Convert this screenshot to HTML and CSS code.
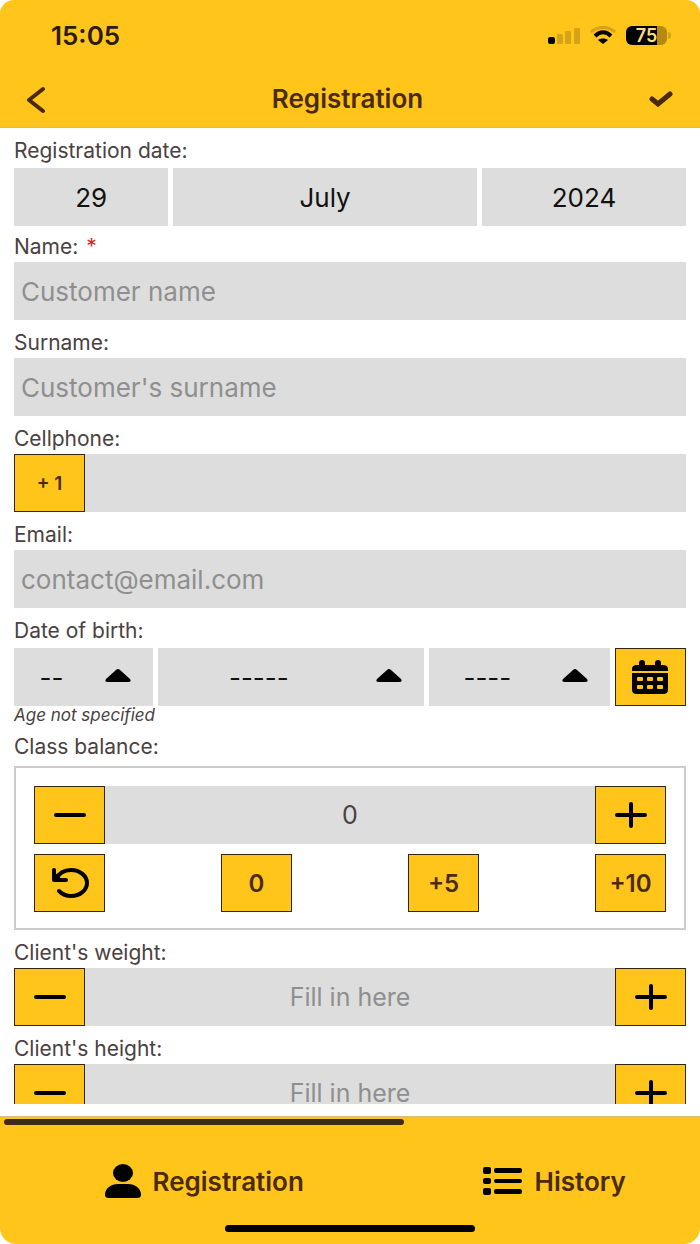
FILE: index.html
```html
<!DOCTYPE html>
<html lang="en">
<head>
  <meta charset="UTF-8">
  <meta name="viewport" content="width=device-width, initial-scale=1.0">
  <title>Registration</title>
  <link rel="stylesheet" href="styles.css">
</head>
<body>
  <header class="header">
    <div class="status-bar">
      <span class="clock">15:05</span>
      <div class="status-icons">
        <svg width="32" height="17" viewBox="0 0 32 17">
          <rect x="0" y="10" width="7" height="7" rx="2"/>
          <g fill="#d6a316">
            <rect x="9" y="7" width="6" height="10" rx="1"/>
            <rect x="17" y="4" width="6" height="13" rx="1"/>
            <rect x="26" y="1" width="6" height="16" rx="1"/>
          </g>
        </svg>
        <svg width="28" height="18" viewBox="0 0 28 18" fill="none">
          <path d="M2 6C9 0 19 0 26 6" stroke="#d6a316" stroke-width="3"/>
          <path d="M6 10C11 5 17 5 22 10" stroke="#000" stroke-width="4"/>
          <path d="M9 14C12 12 16 12 19 14L14 18Z" fill="#000"/>
        </svg>
        <div class="battery">75</div>
      </div>
    </div>
    <div class="nav-bar">
      <button class="nav-btn" type="button" aria-label="Back">
        <svg width="20" height="28" viewBox="0 0 20 28" fill="none" stroke="#4a2a0c" stroke-width="4" stroke-linecap="round" stroke-linejoin="round">
          <path d="M17 4L3 15L17 26"/>
        </svg>
      </button>
      <h1 class="title">Registration</h1>
      <button class="nav-btn" type="submit" form="registrationForm" aria-label="Save">
        <svg width="24" height="16" viewBox="0 0 24 16" fill="none" stroke="#4a2a0c" stroke-width="5" stroke-linecap="round">
          <path d="M3 8L9 13L21 3"/>
        </svg>
      </button>
    </div>
  </header>

  <main class="content">
    <form id="registrationForm">
      <!-- Registration date -->
      <div class="group date-group reg-date">
        <label for="regDay">Registration date:</label>
        <div class="reg-row">
          <select class="field select" id="regDay"><option>29</option></select>
          <select class="field select" aria-label="Month"><option>July</option></select>
          <select class="field select" aria-label="Year"><option>2024</option></select>
        </div>
      </div>

      <div class="group">
        <label for="name">Name: <span class="required">*</span></label>
        <input class="field" type="text" id="name" placeholder="Customer name" required>
      </div>
      <div class="group">
        <label for="surname">Surname:</label>
        <input class="field" type="text" id="surname" placeholder="Customer's surname">
      </div>
      <div class="group">
        <label for="phone">Cellphone:</label>
        <div class="row">
          <button class="btn btn-code" type="button">+ 1</button>
          <input class="field" type="tel" id="phone">
        </div>
      </div>
      <div class="group">
        <label for="email">Email:</label>
        <input class="field" type="email" id="email" placeholder="contact@email.com">
      </div>

      <!-- Date of birth -->
      <div class="group date-group">
        <label for="birthDay">Date of birth:</label>
        <div class="birth-row">
          <div class="select-wrap">
            <select class="field select" id="birthDay"><option>--</option></select>
            <svg class="arrow" width="26" height="14" viewBox="0 0 26 14"><path d="M11 1Q13 -1 15 1L25 10Q27 13 23 13H3Q-1 13 1 10Z"/></svg>
          </div>
          <div class="select-wrap">
            <select class="field select" aria-label="Birth month"><option>-----</option></select>
            <svg class="arrow" width="26" height="14" viewBox="0 0 26 14"><path d="M11 1Q13 -1 15 1L25 10Q27 13 23 13H3Q-1 13 1 10Z"/></svg>
          </div>
          <div class="select-wrap">
            <select class="field select" aria-label="Birth year"><option>----</option></select>
            <svg class="arrow" width="26" height="14" viewBox="0 0 26 14"><path d="M11 1Q13 -1 15 1L25 10Q27 13 23 13H3Q-1 13 1 10Z"/></svg>
          </div>
          <button class="btn" type="button" aria-label="Open calendar">
            <svg width="36" height="34" viewBox="0 0 36 34">
              <path d="M7 5V3Q7 0 10 0T13 3V5H23V3Q23 0 26 0T29 3V5H31Q36 5 36 9V11H0V9Q0 5 5 5Z"/>
              <path fill-rule="evenodd" d="M0 13H36V30Q36 34 31 34H5Q0 34 0 30ZM6 17Q5 17 5 18V20Q5 21 6 21H10Q11 21 11 20V18Q11 17 10 17ZM16 17Q15 17 15 18V20Q15 21 16 21H20Q21 21 21 20V18Q21 17 20 17ZM26 17Q25 17 25 18V20Q25 21 26 21H30Q31 21 31 20V18Q31 17 30 17ZM6 25Q5 25 5 26V28Q5 29 6 29H10Q11 29 11 28V26Q11 25 10 25ZM16 25Q15 25 15 26V28Q15 29 16 29H20Q21 29 21 28V26Q21 25 20 25ZM26 25Q25 25 25 26V28Q25 29 26 29H30Q31 29 31 28V26Q31 25 30 25Z"/>
            </svg>
          </button>
        </div>
        <p class="hint">Age not specified</p>
      </div>

      <!-- Class balance -->
      <div class="group balance-group">
        <label for="balance">Class balance:</label>
        <div class="balance-box">
          <div class="row">
            <button class="btn" type="button" aria-label="Decrease balance">
              <svg class="sign" width="34" height="28" viewBox="0 0 34 28"><path d="M3 14H31"/></svg>
            </button>
            <input class="field centered" type="text" id="balance" value="0">
            <button class="btn" type="button" aria-label="Increase balance">
              <svg class="sign" width="34" height="28" viewBox="0 0 34 28"><path d="M3 14H31M17 3V25"/></svg>
            </button>
          </div>
          <div class="row presets">
            <button class="btn" type="button" aria-label="Undo">
              <svg width="38" height="30" viewBox="0 0 38 30" fill="none" stroke="#000" stroke-width="4" stroke-linecap="round" stroke-linejoin="round">
                <path d="M5 11C8 5 14 2 20 2C29 2 36 8 36 15C36 22 29 28 20 28C15 28 11 26 8 23"/>
                <path d="M3 2V12H15"/>
                <path d="M4 6L9 11H4Z" fill="#000" stroke-width="2"/>
              </svg>
            </button>
            <button class="btn" type="button">0</button>
            <button class="btn" type="button">+5</button>
            <button class="btn" type="button">+10</button>
          </div>
        </div>
      </div>

      <div class="group">
        <label for="weight">Client's weight:</label>
        <div class="row">
          <button class="btn" type="button" aria-label="Decrease weight">
            <svg class="sign" width="34" height="28" viewBox="0 0 34 28"><path d="M3 14H31"/></svg>
          </button>
          <input class="field centered" type="text" id="weight" placeholder="Fill in here">
          <button class="btn" type="button" aria-label="Increase weight">
            <svg class="sign" width="34" height="28" viewBox="0 0 34 28"><path d="M3 14H31M17 3V25"/></svg>
          </button>
        </div>
      </div>
      <div class="group">
        <label for="height">Client's height:</label>
        <div class="row">
          <button class="btn" type="button" aria-label="Decrease height">
            <svg class="sign" width="34" height="28" viewBox="0 0 34 28"><path d="M3 14H31"/></svg>
          </button>
          <input class="field centered" type="text" id="height" placeholder="Fill in here">
          <button class="btn" type="button" aria-label="Increase height">
            <svg class="sign" width="34" height="28" viewBox="0 0 34 28"><path d="M3 14H31M17 3V25"/></svg>
          </button>
        </div>
      </div>
    </form>
  </main>

  <footer class="footer">
    <nav class="tabs">
      <a class="tab active" href="#registration">
        <svg width="36" height="34" viewBox="0 0 36 34">
          <ellipse cx="18" cy="9" rx="10" ry="9"/>
          <path d="M0 31C0 24 6 20 13 20H23C30 20 36 24 36 31Q36 34 32 34H4Q0 34 0 31Z"/>
        </svg>
        Registration
      </a>
      <a class="tab" href="#history">
        <svg width="40" height="28" viewBox="0 0 40 28">
          <rect x="0" y="0" width="8" height="7" rx="2"/>
          <rect x="0" y="11" width="8" height="6" rx="2"/>
          <rect x="0" y="21" width="8" height="7" rx="2"/>
          <rect x="11" y="1" width="28" height="5" rx="2"/>
          <rect x="11" y="12" width="28" height="4" rx="2"/>
          <rect x="11" y="22" width="28" height="5" rx="2"/>
        </svg>
        History
      </a>
    </nav>
    <div class="home-bar"></div>
  </footer>
</body>
</html>
```
FILE: styles.css
```css
* {
  box-sizing: border-box;
}
body {
  margin: 0;
  height: 100vh;
  display: flex;
  flex-direction: column;
  background-color: #fff;
  font-family: Inter, "Liberation Sans", sans-serif;
  color: #4a4140;
}
svg {
  display: block;
  flex: none;
}

/* Header */
.header {
  flex: none;
  background-color: #ffc51a;
  border-bottom: 1px solid #d9bd73;
  border-radius: 14px 14px 0 0;
}
.status-bar {
  display: flex;
  justify-content: space-between;
  align-items: center;
  height: 70px;
  padding: 0 33px 0 51px;
}
.clock {
  font-size: 26px;
  font-weight: 600;
  color: #2b1a05;
}
.status-icons {
  display: flex;
  align-items: center;
  gap: 9px;
}
.battery {
  position: relative;
  width: 41px;
  height: 19px;
  border-radius: 6px;
  background: linear-gradient(to right, #000 75%, #b58a12 75%);
  color: #ffe07a;
  font-size: 18px;
  font-weight: 600;
  line-height: 19px;
  text-align: center;
}
.battery::after {
  content: "";
  position: absolute;
  left: 42px;
  top: 6px;
  width: 3px;
  height: 7px;
  border-radius: 0 3px 3px 0;
  background-color: #d6a316;
}
.nav-bar {
  display: flex;
  justify-content: space-between;
  align-items: center;
  height: 57px;
  padding: 0 27px 0 26px;
}
.nav-btn {
  display: flex;
  padding: 0;
  border: none;
  background: none;
  cursor: pointer;
}
.title {
  margin: 0;
  font-size: 26px;
  font-weight: 600;
  color: #4a2a0c;
}

/* Form */
.content {
  flex: 1;
  min-height: 0;
  margin-bottom: 12px;
  padding: 12px 14px 0;
  overflow-y: auto;
  scrollbar-width: none;
}
.group {
  margin-bottom: 12px;
}
label {
  display: block;
  margin-bottom: 4px;
  font-size: 21px;
  line-height: 22px;
}
.date-group label {
  margin-bottom: 6px;
}
.reg-date {
  margin-bottom: 10px;
}
.balance-group label {
  margin-bottom: 8px;
}
.required {
  margin-left: 2px;
  color: #e02020;
}
.field {
  display: block;
  width: 100%;
  min-width: 0;
  height: 58px;
  margin: 0;
  padding: 0 7px;
  border: none;
  border-radius: 0;
  background-color: #ddd;
  color: #4a4140;
  font-family: inherit;
  font-size: 26px;
}
.field::placeholder {
  color: #8f8f8f;
  opacity: 1;
}
.centered {
  font-size: 25px;
  text-align: center;
}
.select {
  appearance: none;
  color: #111;
  font-size: 26px;
  text-align: center;
  text-align-last: center;
}
.row {
  display: flex;
}
.row .field {
  flex: 1;
}
.reg-row {
  display: grid;
  grid-template-columns: 31fr 61fr 41fr;
  gap: 5px;
}
.birth-row {
  display: grid;
  grid-template-columns: 23fr 44fr 30fr 71px;
  gap: 5px;
}
.select-wrap {
  position: relative;
}
.select-wrap .select {
  padding-right: 71px;
}
.arrow {
  position: absolute;
  right: 22px;
  top: 21px;
  pointer-events: none;
}
.btn {
  flex: none;
  display: flex;
  justify-content: center;
  align-items: center;
  width: 71px;
  height: 58px;
  padding: 0;
  border: 1px solid #33260f;
  background-color: #ffc51a;
  color: #4a2a0c;
  font-family: inherit;
  font-size: 24px;
  font-weight: 600;
  cursor: pointer;
}
.btn-code {
  font-size: 19px;
}
.sign {
  fill: none;
  stroke: #000;
  stroke-width: 4;
  stroke-linecap: round;
}
.hint {
  margin: 0;
  font-size: 17px;
  font-style: italic;
  line-height: 18px;
}
.balance-box {
  padding: 18px 18px 16px;
  border: 2px solid #ccc;
}
.presets {
  justify-content: space-between;
  margin-top: 10px;
}

/* Bottom tabs */
.footer {
  flex: none;
  background-color: #ffc51a;
  border-top: 1px solid #d9bd73;
  border-radius: 0 0 16px 16px;
  padding-bottom: 12px;
}
.tabs {
  display: grid;
  grid-template-columns: 7fr 5fr;
}
.tab {
  position: relative;
  display: flex;
  justify-content: center;
  align-items: center;
  gap: 12px;
  height: 108px;
  padding-top: 20px;
  color: #4a2a0c;
  font-size: 26px;
  font-weight: 600;
  text-decoration: none;
}
.tab svg {
  fill: #000;
}
.active::before {
  content: "";
  position: absolute;
  left: 4px;
  right: 4px;
  top: 2px;
  height: 6px;
  border-radius: 3px;
  background-color: #422818;
}
.home-bar {
  width: 250px;
  height: 7px;
  margin: 0 auto;
  border-radius: 4px;
  background-color: #000;
}
```
